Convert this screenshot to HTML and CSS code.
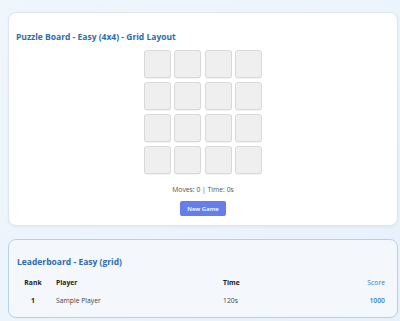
FILE: index.html
```html
<!DOCTYPE html>
<html>
<head>
    <title>Puzzle Board</title>
    <link rel="stylesheet" href="styles.css">
</head>
<body>
    <div class="panel board-panel">
        <h2>Puzzle Board - Easy (4x4) - Grid Layout</h2>
        <div class="board">
            <div class="tile"></div><div class="tile"></div><div class="tile"></div><div class="tile"></div>
            <div class="tile"></div><div class="tile"></div><div class="tile"></div><div class="tile"></div>
            <div class="tile"></div><div class="tile"></div><div class="tile"></div><div class="tile"></div>
            <div class="tile"></div><div class="tile"></div><div class="tile"></div><div class="tile"></div>
        </div>
        <p class="stats">Moves: 0 | Time: 0s</p>
        <button class="new-game">New Game</button>
    </div>

    <div class="panel leaderboard">
        <h2>Leaderboard - Easy (grid)</h2>
        <table>
            <colgroup>
                <col class="col-rank">
                <col class="col-player">
                <col class="col-time">
                <col>
            </colgroup>
            <thead>
                <tr><th class="rank">Rank</th><th>Player</th><th>Time</th><th class="score">Score</th></tr>
            </thead>
            <tbody>
                <tr><td class="rank">1</td><td>Sample Player</td><td>120s</td><td class="score">1000</td></tr>
            </tbody>
        </table>
    </div>
</body>
</html>
```

FILE: styles.css
```css
body {
    margin: 0; padding: 12px 2px 4px 8px;
    font-family: "Segoe UI", "Open Sans", sans-serif; color: #333;
    background: linear-gradient(135deg, #f0f6fc 0%, #e7f1fb 100%);
    min-height: 321px; box-sizing: border-box;
}
.panel { border-radius: 8px; }
.panel h2 { margin: 0; font-size: 8.5px; line-height: 12px; font-weight: 700; color: #2b6cb0; }

.board-panel {
    background: #fff; border: 1px solid #dfe6ee; padding: 18px 7px 9px;
    box-shadow: 0 1px 3px rgba(0,0,0,0.05);
    display: flex; flex-direction: column; align-items: center;
}
.board-panel h2 { align-self: stretch; }
.board {
    margin-top: 7px;
    display: grid; grid-template-columns: repeat(4, 27px); grid-auto-rows: 28px;
    column-gap: 3.5px; row-gap: 4px;
}
.tile {
    background: #efefef; border: 1px solid #d9d9d9; border-radius: 3px;
    box-shadow: 0 1px 1px rgba(0,0,0,0.06);
}
.stats { margin: 10px 0 0; font-size: 6.8px; line-height: 11px; color: #555; }
.new-game {
    margin-top: 6px; width: 46px; height: 15px; padding: 0;
    background: #667eea; color: #fff; border: none; border-radius: 2px;
    font-family: inherit; font-size: 6px; font-weight: 600;
}

.leaderboard {
    margin-top: 13px; background: #f4f8fd; border: 1px solid #b9cfe4;
    padding: 16px 8px 7px;
}
.leaderboard table { width: 100%; border-collapse: collapse; table-layout: fixed; margin-top: 5px; }
.col-rank { width: 32px; }
.col-player { width: 167px; }
.col-time { width: 110px; }
th, td { padding: 0 7px; height: 18.5px; font-size: 6.8px; text-align: left; }
th { font-weight: 700; color: #222; }
td { color: #444; }
.rank { text-align: center; }
td.rank { font-weight: 700; color: #222; }
.score { text-align: right; color: #3182ce; padding-right: 4px; }
th.score { font-weight: 400; }
td.score { font-weight: 600; }
```
